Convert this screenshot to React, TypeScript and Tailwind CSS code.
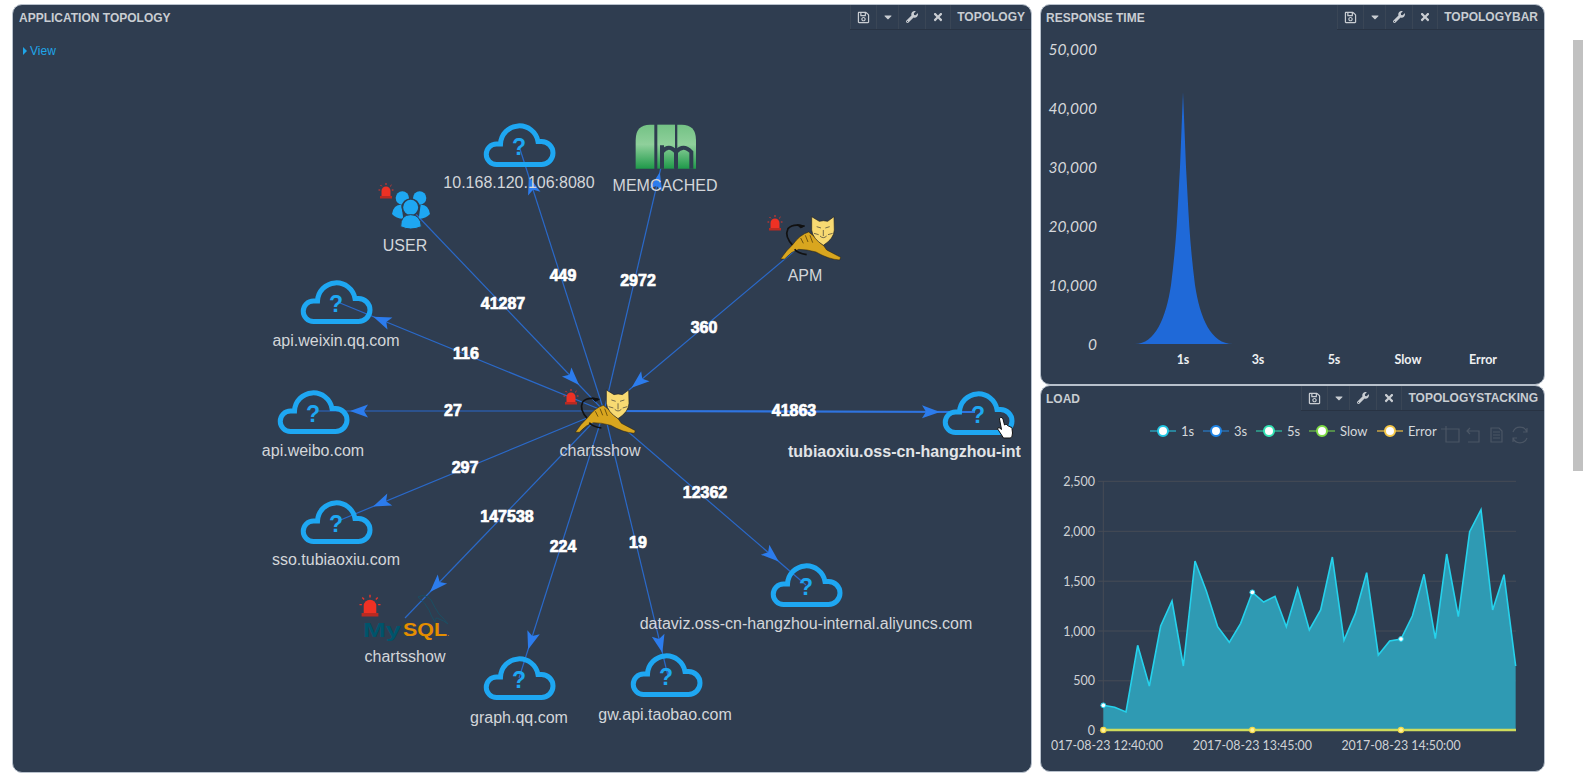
import { FaCaretDown, FaRegSave, FaTimes, FaWrench } from "react-icons/fa";
import type { ReactNode } from "react";

const hub = { x: 604, y: 411 };

// target: centre of the far node, tipGap: distance from the arrow tip to the node it points at
const edges = [
  { x: 410, y: 208, inbound: true, tipGap: 36, label: "41287", lx: 503, ly: 304 },
  { x: 811, y: 237, inbound: true, tipGap: 36, label: "360", lx: 704, ly: 328 },
  { x: 519, y: 146, tipGap: 32, label: "449", lx: 563, ly: 276 },
  { x: 666, y: 146, tipGap: 27, label: "2972", lx: 638, ly: 281 },
  { x: 340, y: 303, tipGap: 36, label: "116", lx: 466, ly: 354 },
  { x: 317, y: 411, tipGap: 33, label: "27", lx: 453, ly: 411 },
  { x: 338, y: 521, tipGap: 38, label: "297", lx: 465, ly: 468 },
  { x: 405, y: 618, tipGap: 36, label: "147538", lx: 507, ly: 517 },
  { x: 519, y: 678, tipGap: 30, label: "224", lx: 563, ly: 547 },
  { x: 668, y: 676, tipGap: 24, label: "19", lx: 638, ly: 543 },
  { x: 806, y: 585, tipGap: 36, label: "12362", lx: 705, ly: 493 },
  { x: 975, y: 412, tipGap: 35, label: "41863", lx: 794, ly: 411, bold: true },
];

const clouds = [
  { x: 519, y: 145, label: "10.168.120.106:8080", ly: 183 },
  { x: 336, y: 302, label: "api.weixin.qq.com", ly: 341 },
  { x: 313, y: 412, label: "api.weibo.com", ly: 451 },
  { x: 336, y: 522, label: "sso.tubiaoxiu.com", ly: 560 },
  { x: 519, y: 678, label: "graph.qq.com", ly: 718 },
  { x: 666, y: 675, label: "gw.api.taobao.com", lx: 665, ly: 715 },
  { x: 806, y: 585, label: "dataviz.oss-cn-hangzhou-internal.aliyuncs.com", ly: 624 },
];

const loadPoints = [
  [220, 733], [254, 739], [288, 753], [323, 553], [358, 675], [392, 495], [426, 420], [460, 615],
  [495, 300], [529, 390], [563, 497], [598, 544], [632, 487], [667, 394], [701, 423], [735, 406],
  [769, 497], [803, 382], [838, 507], [872, 447], [907, 288], [942, 538], [976, 458], [1010, 335],
  [1045, 582], [1079, 540], [1113, 534], [1147, 465], [1182, 340], [1216, 533], [1250, 279],
  [1285, 467], [1319, 212], [1353, 146], [1388, 447], [1422, 341], [1457, 615],
].map(([x, y]) => [1030 + x / 3, 461 + y / 3]);

const legend = [
  { name: "1s", x: 1150, color: "#22c7e4", line: "#2a9db5" },
  { name: "3s", x: 1203, color: "#1e84e6", line: "#2a6fb0" },
  { name: "5s", x: 1256, color: "#34e3b4", line: "#2fa892" },
  { name: "Slow", x: 1309, color: "#7fdc45", line: "#62a84a" },
  { name: "Error", x: 1377, color: "#f7c948", line: "#c9a444" },
];

function Panel({ title, tag, children, className, titleClass = "pl-[5px]" }: { title: string; tag: string; children: ReactNode; className: string; titleClass?: string }) {
  return (
    <section className={`flex flex-col overflow-hidden rounded-[10px] border border-[#b8c1cc] bg-[#2f3d50] ${className}`}>
      <header className="flex h-[25px] shrink-0 items-stretch justify-between text-[12px] font-bold text-[#c9cdd2]">
        <h2 className={`flex items-center ${titleClass}`}>{title}</h2>
        <div className="flex items-stretch border-b border-[#283343]">
          <div className="flex w-[26px] items-center justify-center border-l border-[#3a4656]"><FaRegSave size={13} /></div>
          <div className="flex w-[22px] items-center justify-center border-l border-[#3a4656]"><FaCaretDown size={12} /></div>
          <div className="flex w-[27px] items-center justify-center border-l border-[#3a4656]"><FaWrench size={12} /></div>
          <div className="flex w-[25px] items-center justify-center border-l border-[#3a4656]"><FaTimes size={12} /></div>
          <div className="flex items-center border-l border-[#3a4656] px-[6px]">{tag}</div>
        </div>
      </header>
      {children}
    </section>
  );
}

function CloudNode({ x, y, label, lx, ly }: { x: number; y: number; label?: string; lx?: number; ly?: number }) {
  return (
    <g>
      <g transform={`translate(${x - 36.5} ${y - 23})`}>
        <path
          d="M14,42.5 H59 A11.5,11.5 0 0 0 59,19.5 H55.5 A18.9,18.9 0 0 0 18,22 H14 A10.25,10.25 0 0 0 14,42.5 Z"
          fill="none"
          stroke="#1ea7f2"
          strokeWidth={5}
        />
        <text x={36.5} y={33} textAnchor="middle" fontSize={23} fontWeight={700} fill="#1ea7f2">?</text>
      </g>
      {label && ly ? (
        <text x={lx ?? x} y={ly + 5} textAnchor="middle" fontSize={16} fill="#d3d6da">{label}</text>
      ) : null}
    </g>
  );
}

function Alarm({ x, y, scale = 1 }: { x: number; y: number; scale?: number }) {
  return (
    <g transform={`translate(${x} ${y}) scale(${scale})`}>
      <path d="M-4.5,5 V0 A4.5,4.5 0 0 1 4.5,0 V5 Z" fill="#ee3124" />
      <rect x={-6} y={5} width={12} height={2.5} fill="#b92a22" />
      <path d="M0,-8 V-6 M-5.5,-6 L-4.2,-4.7 M5.5,-6 L4.2,-4.7 M-7.5,-1 H-5.8 M7.5,-1 H5.8" stroke="#e8352a" strokeWidth={1} />
    </g>
  );
}

function Tomcat({ x, y }: { x: number; y: number }) {
  return (
    <g transform={`translate(${x} ${y}) scale(0.3333)`}>
      <path d="M100,108 Q72,80 84,56 Q98,40 130,48" fill="none" stroke="#111" strokeWidth={5} />
      <path d="M112,44 L134,48 L122,54 Z" fill="#111" stroke="#111" strokeWidth={3} />
      <path
        d="M62,147 Q78,122 98,104 Q120,74 146,66 L168,84 Q178,98 190,106 L200,120 L242,142 L239,150 Q206,148 168,126 Q140,118 116,118 Q94,124 74,147 Z"
        fill="#d9a61f"
        stroke="#2a2008"
        strokeWidth={1.5}
      />
      <path d="M122,84 L130,100 M136,76 L144,96 M150,76 L158,98" stroke="#4a3608" strokeWidth={2.2} />
      <path d="M104,118 Q112,130 140,134" fill="none" stroke="#111" strokeWidth={5} />
      <path
        d="M155,20 L178,34 Q190,30 203,34 L222,20 L223,60 Q222,86 190,106 Q158,86 155,60 Z"
        fill="#f8da72"
        stroke="#222"
        strokeWidth={2}
      />
      <path d="M170,50 L183,54 M209,50 L196,54 M190,60 V78 M180,78 Q190,88 200,78 M162,70 L176,74 M218,70 L204,74" stroke="#333" strokeWidth={2} fill="none" />
    </g>
  );
}

function Users({ x, y }: { x: number; y: number }) {
  return (
    <g transform={`translate(${x} ${y}) scale(0.3333)`} fill="#1ea7f2">
      <circle cx={127} cy={84} r={20} />
      <circle cx={179} cy={84} r={20} />
      <path d="M96,132 Q100,104 124,104 L130,146 Q108,146 96,132 Z" />
      <path d="M210,132 Q206,104 182,104 L176,146 Q198,146 210,132 Z" />
      <circle cx={152} cy={112} r={25} stroke="#2f3d50" strokeWidth={5} />
      <path d="M122,170 Q122,134 152,134 Q182,134 184,170 Q152,184 122,170 Z" stroke="#2f3d50" strokeWidth={3} />
    </g>
  );
}

function Memcached({ x, y }: { x: number; y: number }) {
  return (
    <g transform={`translate(${x} ${y}) scale(0.3333)`}>
      <defs>
        <linearGradient id="memGreen" x1="0" y1="0" x2="0" y2="1">
          <stop offset="0" stopColor="#74c285" />
          <stop offset="0.45" stopColor="#8fd09b" />
          <stop offset="1" stopColor="#1f9a4a" />
        </linearGradient>
      </defs>
      <path d="M107,176 V90 Q107,44 150,44 H163 V176 Z" fill="url(#memGreen)" />
      <rect x={172} y={44} width={53} height={132} fill="url(#memGreen)" />
      <path d="M232,176 V44 H245 Q288,44 288,90 V176 Z" fill="url(#memGreen)" />
      <path d="M186,176 V106 M186,126 Q206,100 228,126 V176 M228,126 Q250,100 274,126 V176" fill="none" stroke="#2f3d50" strokeWidth={12} />
    </g>
  );
}

function MySql({ x, y }: { x: number; y: number }) {
  return (
    <g transform={`translate(${x} ${y})`}>
      <path
        d="M55,-9 Q62,-13 68,-6 Q72,2 76,8 Q82,14 85,18 Q80,14 76,13 Q72,10 72,16 Q68,10 66,4 Q62,-4 55,-9 Z"
        fill="none"
        stroke="#1b4f63"
        strokeWidth={1}
      />
      <text x={0} y={31} fontSize={21} fontWeight={700} fill="#00546b" textLength={38} lengthAdjust="spacingAndGlyphs">My</text>
      <text x={40} y={30} fontSize={19} fontWeight={700} fill="#e48e00" textLength={44} lengthAdjust="spacingAndGlyphs">SQL</text>
      <text x={84} y={30} fontSize={8} fill="#e48e00">.</text>
    </g>
  );
}

function HandCursor({ x, y }: { x: number; y: number }) {
  return (
    <path
      transform={`translate(${x} ${y})`}
      d="M3.5,0.5 Q5.5,0 6,2 L7.5,8 L8.5,7.5 Q10,7 10.5,8.5 L11,9 Q12.5,8.5 13,10 Q15,9.5 15,11.5 L15.5,16 Q15.5,20 13.5,21 H6.5 L1,12.5 Q0,10.5 2,10.5 L4.5,12.5 L2.5,2 Q2.5,1 3.5,0.5 Z"
      fill="#fff"
      stroke="#111"
      strokeWidth={1}
    />
  );
}

function Arrow({ fromX, fromY, toX, toY, gap }: { fromX: number; fromY: number; toX: number; toY: number; gap: number }) {
  const len = Math.hypot(toX - fromX, toY - fromY);
  const ux = (toX - fromX) / len;
  const uy = (toY - fromY) / len;
  const tx = toX - ux * gap;
  const ty = toY - uy * gap;
  const bx = tx - ux * 18;
  const by = ty - uy * 18;
  const px = -uy * 6.5;
  const py = ux * 6.5;
  const nx = tx - ux * 14;
  const ny = ty - uy * 14;
  const points = `${tx},${ty} ${bx + px},${by + py} ${nx},${ny} ${bx - px},${by - py}`;
  return <polygon points={points} fill="#2c7ced" />;
}

function Topology() {
  return (
    <svg className="absolute inset-0" width={1018} height={742} viewBox="13 30 1018 742">
      <defs>
        <clipPath id="nodeLabel">
          <rect x={780} y={440} width={241} height={24} />
        </clipPath>
      </defs>

      {edges.map((e) => (
        <g key={e.label}>
          <line x1={hub.x} y1={hub.y} x2={e.x} y2={e.y} stroke={e.bold ? "#2f74e0" : "#2a69c9"} strokeWidth={e.bold ? 2.2 : 1.2} />
          {e.inbound ? (
            <Arrow fromX={e.x} fromY={e.y} toX={hub.x} toY={hub.y} gap={e.tipGap} />
          ) : (
            <Arrow fromX={hub.x} fromY={hub.y} toX={e.x} toY={e.y} gap={e.tipGap} />
          )}
        </g>
      ))}

      {clouds.map((c) => (
        <CloudNode key={c.label} {...c} />
      ))}

      <CloudNode x={978} y={413} />
      <text x={788} y={457} fontSize={16} fontWeight={700} fill="#e2e4e7" clipPath="url(#nodeLabel)">tubiaoxiu.oss-cn-hangzhou-internal.aliyuncs.com</text>
      <HandCursor x={997} y={417} />

      <Tomcat x={554.7} y={383.3} />
      <Alarm x={571} y={397} />
      <text x={600} y={456} textAnchor="middle" fontSize={16} fill="#d3d6da">chartsshow</text>

      <Tomcat x={760} y={210} />
      <Alarm x={775} y={223} />
      <text x={805} y={281} textAnchor="middle" fontSize={16} fill="#d3d6da">APM</text>

      <Users x={360} y={170} />
      <Alarm x={386} y={191} />
      <text x={405} y={251} textAnchor="middle" fontSize={16} fill="#d3d6da">USER</text>

      <Memcached x={600} y={110} />
      <text x={665} y={191} textAnchor="middle" fontSize={16} fill="#d3d6da">MEMCACHED</text>

      <MySql x={363} y={606} />
      <Alarm x={370} y={606} scale={1.4} />
      <text x={405} y={662} textAnchor="middle" fontSize={16} fill="#d3d6da">chartsshow</text>

      {edges.map((e) => (
        <text
          key={e.label}
          x={e.lx}
          y={e.ly + 5}
          textAnchor="middle"
          fontSize={16}
          fontWeight={700}
          fill="#fff"
          stroke="#fff"
          strokeWidth={0.7}
        >
          {e.label}
        </text>
      ))}
    </svg>
  );
}

function ResponseChart() {
  const ticks = [
    { label: "50,000", y: 49 },
    { label: "40,000", y: 108 },
    { label: "30,000", y: 167 },
    { label: "20,000", y: 226 },
    { label: "10,000", y: 285 },
    { label: "0", y: 344 },
  ];
  const cats = [
    { label: "1s", x: 1183 },
    { label: "3s", x: 1258 },
    { label: "5s", x: 1334 },
    { label: "Slow", x: 1408 },
    { label: "Error", x: 1483 },
  ];
  return (
    <svg className="absolute inset-0 font-['Lato',sans-serif]" width={503} height={354} viewBox="1041 30 503 354">
      {ticks.map((t) => (
        <text key={t.label} x={1097} y={t.y + 6} textAnchor="end" fontSize={15.5} fontStyle="italic" fill="#d6d8db">{t.label}</text>
      ))}
      <path
        d="M1135,344 C1155,344 1166,318 1171,285 C1173.5,265 1175.5,245 1176.7,226 C1178,205 1179,185 1180,167 L1183,92 L1186,167 C1187,185 1188,205 1189.3,226 C1190.5,245 1192.5,265 1195,285 C1200,318 1211,344 1233,344 Z"
        fill="#1f69d8"
      />
      {cats.map((c) => (
        <text key={c.label} x={c.x} y={364} textAnchor="middle" fontSize={12.5} fontWeight={700} fill="#eef0f2">{c.label}</text>
      ))}
    </svg>
  );
}

function LoadChart() {
  const gridY = [
    { label: "2,500", y: 481.3 },
    { label: "2,000", y: 531.3 },
    { label: "1,500", y: 581.2 },
    { label: "1,000", y: 631 },
    { label: "500", y: 680.8 },
    { label: "0", y: 730.5 },
  ];
  const dates = [
    { label: "2017-08-23 12:40:00", x: 1103.3 },
    { label: "2017-08-23 13:45:00", x: 1252.3 },
    { label: "2017-08-23 14:50:00", x: 1401 },
  ];
  const line = loadPoints.map((p) => p.join(",")).join(" ");
  const first = loadPoints[0];
  const last = loadPoints[loadPoints.length - 1];
  const dots = [0, 13, 26].map((i) => loadPoints[i]);
  return (
    <svg className="absolute inset-0 font-['Lato',sans-serif]" width={503} height={361} viewBox="1041 411 503 361">
      <defs>
        <clipPath id="xLabels">
          <rect x={1051} y={732} width={490} height={30} />
        </clipPath>
      </defs>

      {legend.map((l) => (
        <g key={l.name}>
          <line x1={l.x} y1={431} x2={l.x + 26} y2={431} stroke={l.line} strokeWidth={1.5} />
          <circle cx={l.x + 13} cy={431} r={5} fill="#fff" stroke={l.color} strokeWidth={2} />
          <text x={l.x + 31} y={435.5} fontSize={13} fill="#d5d8db">{l.name}</text>
        </g>
      ))}

      <g fill="none" stroke="#4b5665" strokeWidth={1.2} transform="translate(0 1)">
        <path d="M1441,428 H1459 V441 H1446 V425" />
        <path d="M1470,427 L1467,430 L1470,433 M1467,430 H1479 V441 H1468" />
        <path d="M1491,427 H1499 L1502,430 V441 H1491 Z M1493,431 H1500 M1493,434 H1500 M1493,437 H1500" />
        <path d="M1513,431 A7.5,7.5 0 0 1 1527,431 M1527,437 A7.5,7.5 0 0 1 1513,437 M1527,427 V431 H1523 M1513,441 V437 H1517" />
      </g>

      {gridY.map((g) => (
        <g key={g.label}>
          <line x1={1098} y1={g.y} x2={1516} y2={g.y} stroke="#474c56" />
          <text x={1095} y={g.y + 4.5} textAnchor="end" fontSize={12.5} fill="#cfd2d6">{g.label}</text>
        </g>
      ))}
      <line x1={1103.3} y1={481} x2={1103.3} y2={731} stroke="#474c56" />

      <polygon points={`${first[0]},730.5 ${line} ${last[0]},730.5`} fill="#2f9ab3" />
      <polyline points={line} fill="none" stroke="#25d2ec" strokeWidth={1.6} />
      <line x1={1103.3} y1={730} x2={1516} y2={730} stroke="#cfdc5c" strokeWidth={2.4} />

      {dots.map((d) => (
        <g key={d[0]}>
          <circle cx={d[0]} cy={d[1]} r={2.4} fill="#fff" stroke="#25d2ec" strokeWidth={1} />
          <circle cx={d[0]} cy={730} r={2.6} fill="#fff29a" stroke="#f2d94a" strokeWidth={1.2} />
        </g>
      ))}

      <g clipPath="url(#xLabels)">
        {dates.map((d) => (
          <text key={d.label} x={d.x} y={749.5} textAnchor="middle" fontSize={12.4} fill="#cfd2d6">{d.label}</text>
        ))}
      </g>
    </svg>
  );
}

export default function App() {
  return (
    <div className="flex h-[773px] gap-[8px] overflow-hidden bg-white pl-[12px] pt-[4px] font-['Liberation_Sans',Arial,sans-serif]">
      <Panel title="APPLICATION TOPOLOGY" tag="TOPOLOGY" className="h-[769px] w-[1020px] shrink-0" titleClass="pl-[6px]">
        <div className="relative flex-1">
          <Topology />
          <a className="relative flex items-center gap-[3px] pl-[10px] pt-[14px] text-[12px] leading-[14px] text-[#1fa5e8]">
            <span className="h-0 w-0 border-y-[4px] border-l-[4px] border-y-transparent border-l-[#1fa5e8]" />
            View
          </a>
        </div>
      </Panel>

      <div className="flex w-[505px] shrink-0 flex-col">
        <Panel title="RESPONSE TIME" tag="TOPOLOGYBAR" className="h-[381px]">
          <div className="relative flex-1">
            <ResponseChart />
          </div>
        </Panel>
        <Panel title="LOAD" tag="TOPOLOGYSTACKING" className="h-[387px]">
          <div className="relative flex-1">
            <LoadChart />
          </div>
        </Panel>
      </div>

      <div className="ml-auto mt-[36px] h-[431px] w-[10px] bg-[#c1c1c1]" />
    </div>
  );
}
